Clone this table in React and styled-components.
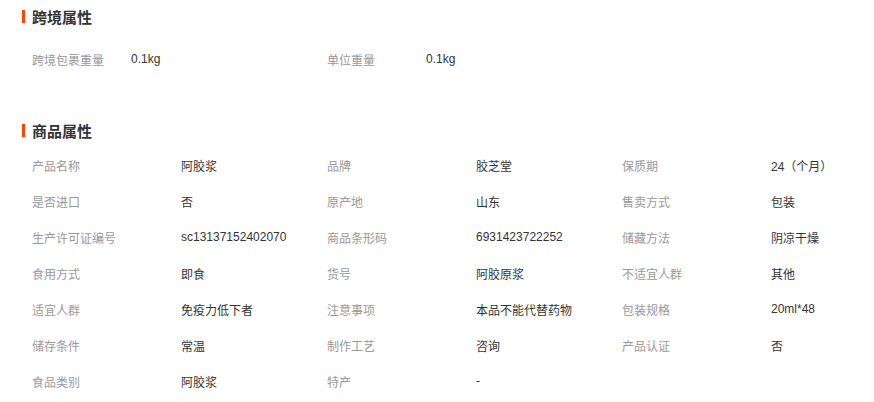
import styled, { createGlobalStyle } from "styled-components";

const GlobalStyle = createGlobalStyle`
  html, body {
    margin: 0;
    padding: 0;
    background: #fff;
  }
  body {
    font-family: "Liberation Sans", "Noto Sans CJK SC", sans-serif;
    font-size: 12px;
    color: #333;
  }
`;

const crossBorder = [
  ["跨境包裹重量", "0.1kg"],
  ["单位重量", "0.1kg"],
];

const goods = [
  ["产品名称", "阿胶浆"],
  ["品牌", "胶芝堂"],
  ["保质期", "24（个月）"],
  ["是否进口", "否"],
  ["原产地", "山东"],
  ["售卖方式", "包装"],
  ["生产许可证编号", "sc13137152402070"],
  ["商品条形码", "6931423722252"],
  ["储藏方法", "阴凉干燥"],
  ["食用方式", "即食"],
  ["货号", "阿胶原浆"],
  ["不适宜人群", "其他"],
  ["适宜人群", "免疫力低下者"],
  ["注意事项", "本品不能代替药物"],
  ["包装规格", "20ml*48"],
  ["储存条件", "常温"],
  ["制作工艺", "咨询"],
  ["产品认证", "否"],
  ["食品类别", "阿胶浆"],
  ["特产", "-"],
];

const Page = styled.div`
  padding: 6px 0 0 22px;
  width: 852px;
`;

const Section = styled.section`
  margin-top: ${(p) => p.$top || 0}px;
`;

const Heading = styled.h3`
  margin: 0;
  display: flex;
  align-items: center;
  height: 20px;
  font-size: 15px;
  font-weight: bold;
  color: #333;
  font-family: "Noto Sans CJK SC", sans-serif;

  &::before {
    content: "";
    width: 3px;
    height: 13px;
    background: #ff4400;
    margin-right: 7px;
  }
`;

const Grid = styled.div`
  display: grid;
  grid-template-columns: repeat(3, 295px);
  padding-left: 10px;
  margin-top: ${(p) => p.$gap}px;
`;

const Item = styled.div`
  display: flex;
  align-items: center;
  height: 36px;
`;

const Label = styled.span`
  width: ${(p) => p.$w}px;
  flex-shrink: 0;
  color: #999;
`;

const Value = styled.span`
  color: #333;
`;

function Attrs({ items, labelWidth, gap }) {
  return (
    <Grid $gap={gap}>
      {items.map(([k, v]) => (
        <Item key={k}>
          <Label $w={labelWidth}>{k}</Label>
          <Value>{v}</Value>
        </Item>
      ))}
    </Grid>
  );
}

export default function App() {
  return (
    <>
      <GlobalStyle />
      <Page>
        <Section>
          <Heading>跨境属性</Heading>
          <Attrs items={crossBorder} labelWidth={99} gap={15} />
        </Section>
        <Section $top={43}>
          <Heading>商品属性</Heading>
          <Attrs items={goods} labelWidth={149} gap={7} />
        </Section>
      </Page>
    </>
  );
}
